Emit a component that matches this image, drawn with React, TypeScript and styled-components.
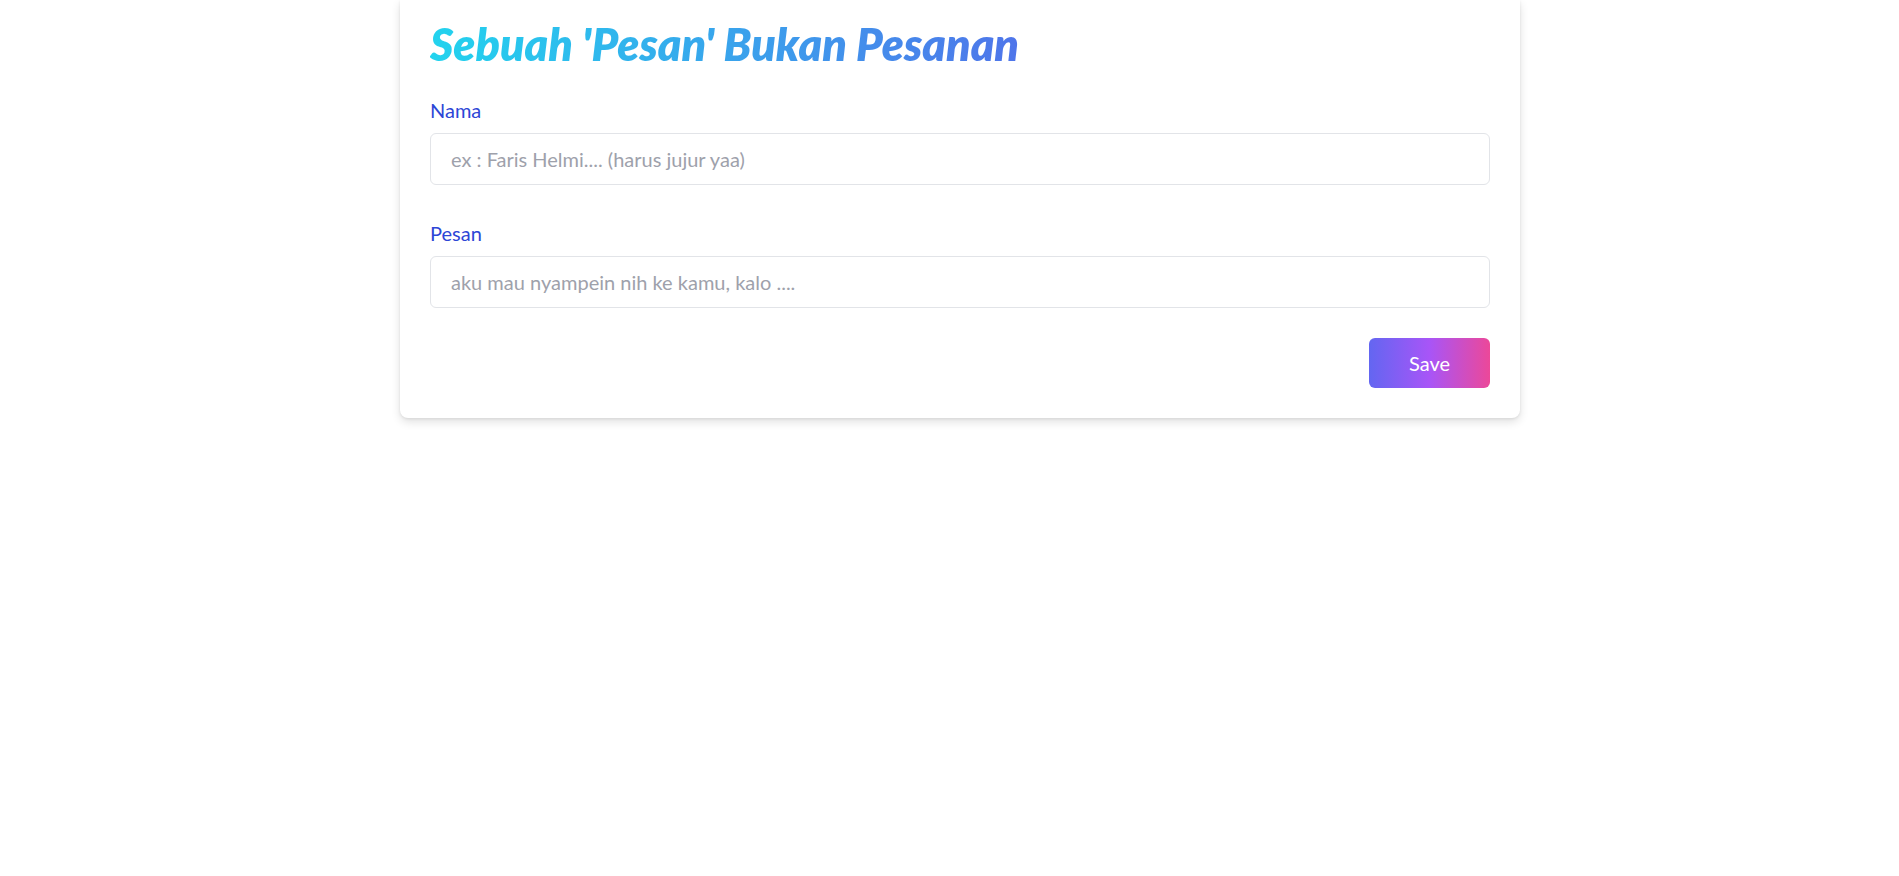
import React from "react";
import styled, { createGlobalStyle } from "styled-components";

const Global = createGlobalStyle`
  * { box-sizing: border-box; }
  html, body { margin: 0; padding: 0; background: #ffffff; }
  body { font-family: Lato, "Noto Sans", sans-serif; }
`;

const Page = styled.div`
  display: flex;
  justify-content: center;
  padding-left: 21px;
  min-height: 876px;
  align-items: flex-start;
`;

const Card = styled.form`
  width: 1120px;
  background: #ffffff;
  border-radius: 0 0 8px 8px;
  box-shadow: 0 4px 10px rgba(0, 0, 0, 0.12), 0 1px 3px rgba(0, 0, 0, 0.08);
  padding: 16px 30px 30px;
  display: flex;
  flex-direction: column;
`;

const Title = styled.h1`
  margin: 0 0 23px;
  font-family: Lato, sans-serif;
  font-style: italic;
  font-weight: 800;
  font-size: 44.7px;
  line-height: 57px;
  align-self: flex-start;
  background: linear-gradient(to right, #22d3ee, #4f75ea);
  -webkit-background-clip: text;
  background-clip: text;
  color: transparent;
`;

const Field = styled.div<{ $gap?: number }>`
  display: flex;
  flex-direction: column;
  margin-bottom: ${(p) => p.$gap ?? 0}px;
`;

const Label = styled.label`
  font-family: Lato, sans-serif;
  font-size: 20px;
  line-height: 28px;
  color: #2d46d6;
  margin-bottom: 9px;
`;

const Input = styled.input`
  height: 52px;
  width: 100%;
  border: 1px solid #e2e4e8;
  border-radius: 6px;
  padding: 0 20px;
  font-family: Lato, sans-serif;
  font-size: 20px;
  color: #374151;
  outline: none;
  &::placeholder {
    color: #9ea1ab;
  }
`;

const Actions = styled.div`
  display: flex;
  justify-content: flex-end;
  margin-top: 30px;
`;

const SaveButton = styled.button`
  width: 121px;
  height: 50px;
  border: none;
  border-radius: 6px;
  background: linear-gradient(to right, #6366f1, #a855f7, #ec4899);
  color: #ffffff;
  font-family: Lato, sans-serif;
  font-size: 20px;
  cursor: pointer;
`;

export default function App() {
  return (
    <>
      <Global />
      <Page>
        <Card onSubmit={(e) => e.preventDefault()}>
          <Title>Sebuah 'Pesan' Bukan Pesanan</Title>
          <Field $gap={34}>
            <Label htmlFor="nama">Nama</Label>
            <Input id="nama" placeholder="ex : Faris Helmi.... (harus jujur yaa)" />
          </Field>
          <Field>
            <Label htmlFor="pesan">Pesan</Label>
            <Input id="pesan" placeholder="aku mau nyampein nih ke kamu, kalo ...." />
          </Field>
          <Actions>
            <SaveButton type="submit">Save</SaveButton>
          </Actions>
        </Card>
      </Page>
    </>
  );
}
